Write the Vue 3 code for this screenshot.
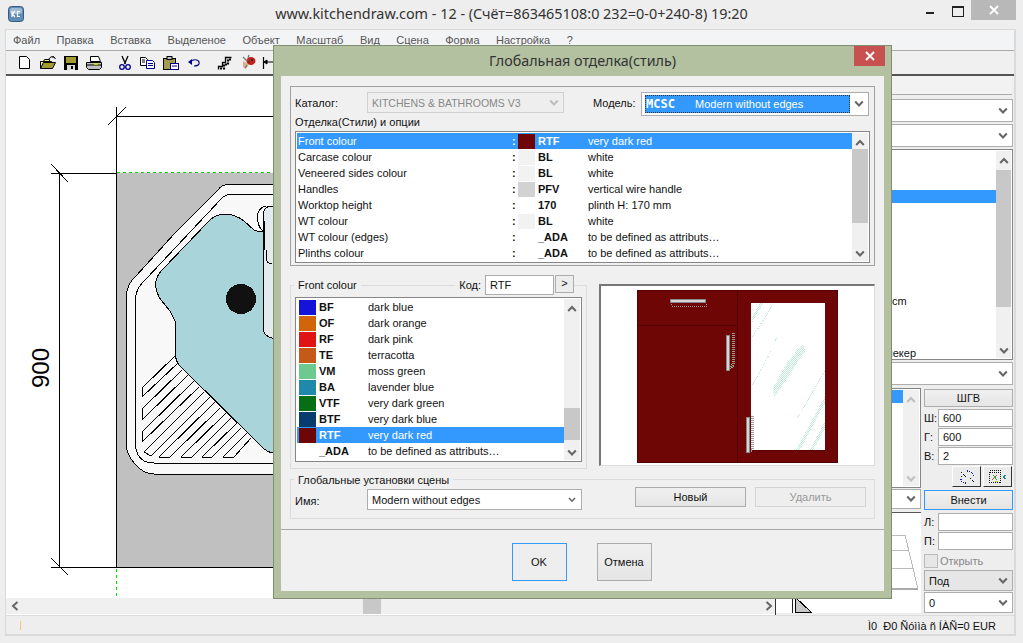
<script setup>
const menu = ['Файл','Правка','Вставка','Выделеное','Объект','Масштаб','Вид','Сцена','Форма','Настройка','?']
const options = [
  { name:'Front colour', sw:'#6e0606', code:'RTF', desc:'very dark red', sel:true },
  { name:'Carcase colour', sw:'#f2f2f2', code:'BL', desc:'white' },
  { name:'Veneered sides colour', sw:'#f2f2f2', code:'BL', desc:'white' },
  { name:'Handles', sw:'#d2d2d2', code:'PFV', desc:'vertical wire handle' },
  { name:'Worktop height', sw:'', code:'170', desc:'plinth H: 170 mm' },
  { name:'WT colour', sw:'#f2f2f2', code:'BL', desc:'white' },
  { name:'WT colour (edges)', sw:'', code:'_ADA', desc:'to be defined as attributs…' },
  { name:'Plinths colour', sw:'', code:'_ADA', desc:'to be defined as attributs…' },
]
const colours = [
  { sw:'#1414d8', code:'BF', desc:'dark blue' },
  { sw:'#d2650a', code:'OF', desc:'dark orange' },
  { sw:'#e01414', code:'RF', desc:'dark pink' },
  { sw:'#c55a18', code:'TE', desc:'terracotta' },
  { sw:'#6cca90', code:'VM', desc:'moss green' },
  { sw:'#2088aa', code:'BA', desc:'lavender blue' },
  { sw:'#066e14', code:'VTF', desc:'very dark green' },
  { sw:'#063c6e', code:'BTF', desc:'very dark blue' },
  { sw:'#6e0606', code:'RTF', desc:'very dark red', sel:true },
  { sw:'', code:'_ADA', desc:'to be defined as attributs…' },
]
const sideRows = Array.from({ length: 16 }, (_, i) => ({
  text: i === 11 ? 'cm' : i === 15 ? 'чекер' : '',
  sel: i === 3,
  cls: i === 11 ? 'r-cm' : i === 15 ? 'r-ch' : '',
}))
const hatch = [
  [176,355,142,388],[178,363,142,397],[142,388,142,397],[182,370,142,409],[142,409,142,419],
  [188,375,142,420],[194,381,142,432],[142,431,142,442],[199,387,142,442],[204,392,144,452],
  [144,452,151,456],[210,397,151,456],[215,402,159,457],[220,408,170,457],[226,413,181,457],
  [231,418,192,457],[237,423,202,457],[241,428,212,457],[247,433,223,457],[251,438,234,457],
  [159,457,170,457],[181,457,192,457],[202,457,212,457],[223,457,234,457]
]
</script>

<template>
  <div class="win">
    <svg class="defs" width="0" height="0">
      <symbol id="cd" viewBox="0 0 10 8"><path d="M1.2 1.5 L5 5.5 L8.8 1.5" fill="none" stroke="#666" stroke-width="2"/></symbol>
      <symbol id="cu" viewBox="0 0 10 8"><path d="M1.2 6 L5 2 L8.8 6" fill="none" stroke="#666" stroke-width="2"/></symbol>
    </svg>

    <header class="titlebar">
      <svg class="logo" width="16" height="16" viewBox="0 0 16 16">
        <rect x=".5" y=".5" width="15" height="15" rx="3" fill="#5f8db8" stroke="#39597a"/>
        <rect x="2" y="2" width="12" height="6" rx="2" fill="#9dbbd6"/>
        <path d="M4 5v6M7 5L4.5 8 7 11M12 5.500H9.500v5H12" fill="none" stroke="#fff" stroke-width="1.200"/>
      </svg>
      <div class="title">www.kitchendraw.com - 12 - (Счёт=863465108:0 232=0-0+240-8) 19:20</div>
      <div class="winbtns">
        <span class="wmin"></span>
        <span class="wmax"></span>
        <span class="wclose">
          <svg width="10" height="10" viewBox="0 0 10 10"><path d="M1 1L9 9M9 1L1 9" stroke="#fff" stroke-width="1.800"/></svg>
        </span>
      </div>
    </header>

    <div class="frame">
      <nav class="menubar">
        <span v-for="m in menu" :key="m">{{ m }}</span>
      </nav>
      <div class="toolbar">
        <svg class="tools" width="262" height="22" viewBox="14 52 262 22">
          <path d="M19.500 56.500h7l3 3v9h-10z" fill="#fff" stroke="#000"/>
          <path d="M40.500 61.500h3l1-2h5v2M40.500 68.500v-7h11v1" fill="#f4ee8e" stroke="#000"/>
          <path d="M40.500 68.500l3-6h12l-3 6z" fill="#a39a30" stroke="#000"/>
          <path d="M49 59c1-2 3-3 5-2M54 57l1.500 2M54 57l-2 0" fill="none" stroke="#000"/>
          <rect x="64" y="56" width="14" height="14" fill="#000"/>
          <rect x="66" y="57" width="10" height="6" fill="#a39a30"/>
          <rect x="67" y="65" width="8" height="5" fill="#d8d8d8"/>
          <rect x="71" y="66" width="2" height="3" fill="#000"/>
          <path d="M90.500 56.500h8l2 5h-10z" fill="#fff" stroke="#000"/>
          <path d="M86.500 62.500h15v5l-2 2h-11l-2-2z" fill="#c0c0c0" stroke="#000"/>
          <path d="M87 65h14" stroke="#000"/><path d="M94 64h4" stroke="#e8e000" stroke-width="1.500"/>
          <path d="M122 56l3.500 8M128 56l-3.500 8" stroke="#000" stroke-width="1.300"/>
          <circle cx="122" cy="67" r="2.300" fill="none" stroke="#00008c" stroke-width="1.300"/>
          <circle cx="128" cy="67" r="2.300" fill="none" stroke="#00008c" stroke-width="1.300"/>
          <path d="M140.500 57.500h5l2 2v6h-7z" fill="#fff" stroke="#000"/>
          <path d="M142 60h3M142 62h3" stroke="#000"/>
          <path d="M146.500 60.500h6l2 2v6h-8z" fill="#fff" stroke="#00008c"/>
          <path d="M148 63.500h5M148 65.500h5" stroke="#00008c"/>
          <rect x="163.500" y="58.500" width="12" height="11" fill="#a39a50" stroke="#000"/>
          <rect x="167" y="56.500" width="5" height="3" fill="#c0c0c0" stroke="#000"/>
          <rect x="170.500" y="63.500" width="8" height="6" fill="#fff" stroke="#00008c"/>
          <path d="M172 66h5" stroke="#00008c"/>
          <path d="M190 62c3-3 8-3 9 0 1 3-2 4-5 4" fill="none" stroke="#00008c" stroke-width="1.200"/>
          <path d="M188 62l4-3v6z" fill="#00008c"/>
          <path d="M218.500 69.500v-3h4v-4h3v-5h6" fill="none" stroke="#000" stroke-width="1.300"/>
          <path d="M220 68.500h4v-4h4v-5h4" fill="none" stroke="#000" stroke-width="2.200" stroke-dasharray="2 1"/>
          <path d="M243 61l6 3-3 5-3-2z" fill="#d8b090"/>
          <ellipse cx="251" cy="61" rx="4.500" ry="4" fill="#c4231c"/>
          <circle cx="252" cy="60" r="1" fill="#222"/><circle cx="249" cy="62" r=".8" fill="#222"/>
          <path d="M243 57l4 4M249 55l-1 3M245 68l2-3" stroke="#777" stroke-width="1.300"/>
          <path d="M263.500 57v12" stroke="#000" stroke-width="1.200"/>
          <path d="M264 62h9M264 62l3-2v4z" stroke="#000" fill="#000"/>
        </svg>
      </div>

      <div class="main">
        <div class="left">
          <div class="canvas">
            <svg class="plan" width="769" height="521" viewBox="6 77 769 521" shape-rendering="crispEdges">
              <rect x="116" y="173" width="659" height="394" fill="#c0c0c0"/>
              <path d="M116 116.500H775M116.500 107V567M51 173.500H116M59.500 173V567M51 567.500H775" stroke="#000" stroke-width="1" fill="none"/>
              <path d="M108 125L126 107M51 164L68 182M51 558L68 575" stroke="#000" fill="none"/>
              <path d="M117 172.500H775" stroke="#00e000" stroke-dasharray="3 3"/>
              <path d="M116.500 569V598" stroke="#00e000" stroke-dasharray="3 3"/>
              <path d="M775 184.500H230Q222 184 218 190L175 233L136 276Q127 284 126.500 295V447Q127 454 134 463Q143 474 154 474H775V184" fill="#f8f8f8" stroke="#000"/>
              <path d="M775 194.500H232Q226 194 222 198L146 279Q136 288 135.500 298V445Q136 456 144 461Q148 463 154 463H775" fill="none" stroke="#000"/>
              <path d="M775 232H263Q258 232 254 230L244 221Q235 214 224 214Q214 215 208 222L163 269Q156 276 155.500 284Q156 293 161 300L170 311L175.500 322V355Q176 362 180 366L262 447Q267 452 273 453H775Z" fill="#a8d4da" stroke="#000"/>
              <path d="M266 206Q257 208 257.500 218Q258 228 264 232" fill="#f8f8f8" stroke="#000"/>
              <path d="M775 206H272Q264 206 263.500 214V330Q264 336 272 338H775Z" fill="#e4eaed" stroke="#000"/>
              <path d="M264 221V250" stroke="#000" stroke-width="1.500"/>
              <path d="M266 250V258Q266 263 272 264" fill="none" stroke="#000"/>
              <circle cx="241" cy="299" r="15" fill="#111"/>
              <path v-for="(h, i) in hatch" :key="i" :d="`M${h[0]} ${h[1]}L${h[2]} ${h[3]}`" stroke="#000" fill="none"/>
              <text class="dim" transform="translate(49 388) rotate(-90)">900</text>
            </svg>
          </div>
          <div class="hscroll">
            <svg class="hs-l" width="8" height="10" viewBox="0 0 8 10"><path d="M6.500 1L2 5l4.500 4" fill="none" stroke="#666" stroke-width="2"/></svg>
            <span class="hs-thumb"></span>
            <svg class="hs-r" width="8" height="10" viewBox="0 0 8 10"><path d="M1.500 1L6 5l-4.500 4" fill="none" stroke="#666" stroke-width="2"/></svg>
          </div>
        </div>

        <aside class="side">
          <div class="band"></div>
          <div class="sel wh h24"><svg class="chev"><use href="#cd"/></svg></div>
          <div class="sel wh h24 mt2"><svg class="chev"><use href="#cd"/></svg></div>
          <div class="bigl">
            <div class="bigrows">
              <div v-for="(r, i) in sideRows" :key="i" class="bigrow" :class="[r.cls, { on: r.sel }]">{{ r.text }}</div>
            </div>
            <div class="sb sb1">
              <svg class="arr"><use href="#cu"/></svg>
              <div class="thumb t-big"></div>
              <svg class="arr end"><use href="#cd"/></svg>
            </div>
          </div>
          <div class="sel wh h24 mt2"><svg class="chev"><use href="#cd"/></svg></div>
          <div class="lower">
            <div class="lowleft">
              <div class="smalllist">
                <div class="smallrows"><div class="smallrow"></div></div>
                <div class="sb sb2">
                  <svg class="arr"><use href="#cu" opacity=".35"/></svg>
                  <svg class="arr end"><use href="#cd" opacity=".35"/></svg>
                </div>
              </div>
              <div class="sel wh h20"><svg class="chev"><use href="#cd"/></svg></div>
              <div class="drawbox">
                <svg width="145" height="100" viewBox="776 513 145 100" shape-rendering="crispEdges">
                  <path d="M792.500 585V613" stroke="#222"/>
                  <path d="M795 597V612H811Z" fill="#c8c8c8" stroke="#000"/>
                  <path d="M795 597L811 612" stroke="#000"/>
                  <path d="M880 535H905L918 589M880 550H909M880 568H913" fill="none" stroke="#bbb" stroke-width="1"/>
                  <path d="M880 589H918" stroke="#aaa" stroke-width="2"/>
                </svg>
              </div>
            </div>
            <div class="lowright">
              <button class="btn b-shgv">ШГВ</button>
              <label class="fld"><b>Ш:</b><span class="inp">600</span></label>
              <label class="fld"><b>Г:</b><span class="inp">600</span></label>
              <label class="fld"><b>В:</b><span class="inp">2</span></label>
              <div class="iconbtns">
                <span class="ib">
                  <svg width="18" height="16" viewBox="0 0 18 16" shape-rendering="crispEdges"><path d="M9 2q5 0 6 5M3 10q0 4 6 4" stroke="#1a1ad0" stroke-width="1.300" stroke-dasharray="1 1" fill="none"/><path d="M3 3l5 5M3 8l3-3M12 9l4 4" stroke="#111" stroke-width="1.300" stroke-dasharray="2 1" fill="none"/></svg>
                </span>
                <span class="ib">
                  <svg width="20" height="16" viewBox="0 0 20 16" shape-rendering="crispEdges"><rect x="1.500" y="1.500" width="11" height="12" fill="none" stroke="#111" stroke-dasharray="1 1"/><path d="M2 3h10" stroke="#111" stroke-dasharray="1 1"/><path d="M4 11l5-5" stroke="#d44"/><path d="M5 6l4 5" stroke="#2a2"/><path d="M7 12h3" stroke="#cc2"/><path d="M18 6l-3 2 3 2" fill="none" stroke="#1a8a8a" stroke-width="1.300"/></svg>
                </span>
              </div>
              <button class="btn b-in">Внести</button>
              <label class="fld"><b>Л:</b><span class="inp"></span></label>
              <label class="fld"><b>П:</b><span class="inp"></span></label>
              <div class="chk"><span class="box"></span>Открыть</div>
              <div class="sel gray h21"><span>Под</span><svg class="chev"><use href="#cd"/></svg></div>
              <div class="sel wh h21 mt1"><span>0</span><svg class="chev"><use href="#cd"/></svg></div>
            </div>
          </div>
        </aside>
      </div>

      <footer class="status">
        <span class="tick"></span>
        <span class="stext">Ì0&nbsp;&nbsp;Ð0 Ñóììà ñ ÍÀÑ=0 EUR</span>
      </footer>
    </div>

    <section class="dlg">
      <div class="dlgtitle">
        <span>Глобальная отделка(стиль)</span>
        <span class="dclose">
          <svg width="10" height="10" viewBox="0 0 10 10"><path d="M1 1L9 9M9 1L1 9" stroke="#fff" stroke-width="1.800"/></svg>
        </span>
      </div>
      <div class="client">
        <div class="gtop">
          <div class="catrow">
            <span class="lcat">Каталог:</span>
            <div class="sel dis"><span>KITCHENS &amp; BATHROOMS V3</span><svg class="chev"><use href="#cd" opacity=".35"/></svg></div>
            <span class="lmod">Модель:</span>
            <div class="sel model">
              <div class="mfocus"><b>MCSC</b><span>Modern without edges</span></div>
              <svg class="chev"><use href="#cd"/></svg>
            </div>
          </div>
          <div class="optlabel">Отделка(Стили) и опции</div>
          <div class="list optlist">
            <div class="rows">
              <div v-for="o in options" :key="o.name" class="row" :class="{ on: o.sel }">
                <span class="oname">{{ o.name }}</span>
                <span class="colon">:</span>
                <span class="sw" :style="{ background: o.sw || 'transparent' }"></span>
                <b class="ocode">{{ o.code }}</b>
                <span>{{ o.desc }}</span>
              </div>
            </div>
            <div class="sb">
              <svg class="arr"><use href="#cu"/></svg>
              <div class="thumb t-opt"></div>
              <svg class="arr end"><use href="#cd"/></svg>
            </div>
          </div>
        </div>

        <div class="midrow">
          <div class="gcol">
            <div class="gchead">
              <span class="lg">Front colour</span>
              <span class="lg lkod">Код:</span>
              <span class="kod">RTF</span>
              <span class="kgo">&gt;</span>
            </div>
            <div class="list collist">
              <div class="rows">
                <div v-for="c in colours" :key="c.code" class="row" :class="{ on: c.sel }">
                  <span class="sw csw" :style="{ background: c.sw || 'transparent' }"></span>
                  <b class="ccode">{{ c.code }}</b>
                  <span>{{ c.desc }}</span>
                </div>
              </div>
              <div class="sb">
                <svg class="arr"><use href="#cu"/></svg>
                <div class="thumb t-col"></div>
                <svg class="arr end"><use href="#cd"/></svg>
              </div>
            </div>
          </div>
          <div class="preview">
            <svg width="273" height="180" viewBox="601 285 273 180" shape-rendering="crispEdges">
              <defs>
                <pattern id="dots" width="2" height="2" patternUnits="userSpaceOnUse">
                  <rect width="1" height="1" fill="#bfe8dc"/><rect x="1" y="1" width="1" height="1" fill="#bfe8dc"/>
                </pattern>
              </defs>
              <rect x="637.500" y="289.500" width="200" height="172" fill="#6e0606" stroke="#520404"/>
              <path d="M637 324.500H737M737.500 289V462" stroke="#520404"/>
              <rect x="751" y="302" width="74" height="147" fill="#fff"/>
              <path d="M751 449.500H825" stroke="#520404"/>
              <g fill="url(#dots)">
                <path d="M752 316L760 302H763L752 322Z"/>
                <path d="M803 342L805 350L790 373L774 397L773 387L787 362Z"/>
                <path d="M825 395V402L800 449H796Z"/>
                <path d="M825 420V428L813 449H810Z"/>
              </g>
              <g fill="none" stroke="#bfe8dc" stroke-dasharray="1 1">
                <path d="M772 305L752 337M771 350L752 385M825 370L802 409M800 413L797 417M777 337L775 340"/>
              </g>
              <path d="M671 303L672 305H707L706 302" fill="none" stroke="#999" stroke-dasharray="1 1"/>
              <rect x="670.500" y="298.500" width="35" height="3" fill="#d6d6d6" stroke="#888"/>
              <path d="M733 332V364L729 369" fill="none" stroke="#999" stroke-width="3" stroke-dasharray="1 1"/>
              <rect x="726.500" y="334.500" width="3" height="35" fill="#d6d6d6" stroke="#888"/>
              <path d="M752 415V449L749 450" fill="none" stroke="#999" stroke-width="3" stroke-dasharray="1 1"/>
              <rect x="746.500" y="416.500" width="3" height="35" fill="#d6d6d6" stroke="#888"/>
            </svg>
          </div>
        </div>

        <div class="gglob">
          <div class="globlab">Глобальные установки сцены</div>
          <div class="globrow">
            <span class="lname">Имя:</span>
            <div class="sel wh gname"><span>Modern without edges</span><svg class="chev sm"><use href="#cd"/></svg></div>
            <button class="btn b-new">Новый</button>
            <button class="btn b-del" disabled>Удалить</button>
          </div>
        </div>

        <div class="actions">
          <button class="btn big focus">OK</button>
          <button class="btn big">Отмена</button>
        </div>
      </div>
    </section>
  </div>
</template>

<style scoped>
.win { position: relative; width: 1023px; height: 643px; overflow: hidden; background: #eeeeee; color: #111; font: 11px/16px "Liberation Sans", sans-serif; }
.defs { position: absolute; }
.titlebar { height: 29px; display: flex; align-items: center; position: relative; justify-content: center; }
.logo { position: absolute; left: 8px; top: 6px; }
.title { font: 14.400px/18px "Noto Sans", sans-serif; color: #333; margin-top: -1px; }
.winbtns { position: absolute; right: 7px; top: 0; display: flex; align-items: flex-start; }
.wmin { width: 8px; height: 2px; background: #222; margin: 12px 18px 0 0; }
.wmax { width: 10px; height: 8px; border: 1px solid #222; border-top-width: 2px; margin: 6px 7px 0 0; }
.wclose { width: 45px; height: 20px; background: #b8b8b8; display: flex; align-items: center; justify-content: center; }

.frame { margin: 0 7px 0 5px; height: 607px; border: 1px solid #dadada; border-right-width: 2px; box-sizing: border-box; display: flex; flex-direction: column; }
.menubar { height: 21px; background: #f3f4f6; border-bottom: 1px solid #a8a8a8; display: flex; gap: 16.500px; padding-left: 7px; align-items: center; color: #555; box-sizing: border-box; flex: none; }
.toolbar { height: 25px; flex: none; background: #f0f0f0; border-bottom: 2px solid #555; box-sizing: border-box; padding: 1px 0 0 8px; }
.tools { display: block; }
.main { flex: none; height: 539px; display: flex; }
.left { width: 769px; flex: none; display: flex; flex-direction: column; }
.canvas { height: 522px; background: #fff; flex: none; }
.plan { display: block; margin-top: 1px; }
.dim { font: 24px "Liberation Sans", sans-serif; fill: #000; }
.hscroll { height: 16px; background: #f0f0f0; border-bottom: 1px solid #fff; display: flex; align-items: center; position: relative; }
.hs-l { margin-left: 5px; }
.hs-thumb { width: 18px; height: 16px; background: #c8c8c8; margin-left: 344px; }
.hs-r { margin-left: auto; margin-right: 2px; }

.side { flex: 1; display: flex; flex-direction: column; border-left: 1px solid #333; min-width: 0; padding-right: 1px; box-sizing: border-box; }
.band { height: 19px; flex: none; border-bottom: 1px solid #aaa; margin: 0 1px 4px 0; box-sizing: border-box; background: #f2f2f2; }
.sel { position: relative; display: flex; align-items: center; box-sizing: border-box; border: 1px solid #adadad; flex: none; padding-left: 4px; }
.wh { background: #fff; }
.gray { background: #e6e6e6; border-color: #adadad; }
.h24 { height: 23px; }
.h20 { height: 20px; margin-top: 1px; }
.h21 { height: 21px; }
.mt2 { margin-top: 2px; }
.mt1 { margin-top: 1px; }
.chev { position: absolute; right: 4px; top: 50%; margin-top: -4px; width: 10px; height: 8px; }
.chev.sm { transform: scale(.8); }
.bigl { margin-top: 2px; height: 211px; display: flex; background: #fff; border: 1px solid #868686; box-sizing: border-box; flex: none; padding: 1px; }
.bigrows { flex: 1; }
.bigrow { height: 13px; line-height: 14px; }
.bigrow.on { background: #3399ff; }
.r-cm { padding-left: 114px; }
.r-ch { padding-left: 109px; }
.sb { width: 16px; flex: none; background: #f0f0f0; display: flex; flex-direction: column; align-items: stretch; }
.sb1 { width: 15px; }
.arr { width: 10px; height: 8px; margin: 6px auto 3px; flex: none; }
.arr.end { margin: auto auto 3px; }
.thumb { background: #c8c8c8; flex: none; }
.t-big { height: 137px; margin-top: 2px; }
.t-opt { height: 74px; margin-top: -1px; }
.t-col { height: 32px; margin-top: 92px; }
.lower { display: flex; flex: none; margin-top: 3px; }
.lowleft { width: 145px; flex: none; display: flex; flex-direction: column; }
.smalllist { height: 100px; display: flex; background: #fff; border: 1px solid #868686; box-sizing: border-box; padding: 1px; }
.smallrows { flex: 1; }
.smallrow { height: 13px; background: #3399ff; }
.sb2 { width: 16px; }
.drawbox { margin-top: 3px; height: 101px; background: #fff; border-top: 1px solid #555; box-sizing: border-box; }
.drawbox svg { display: block; }
.lowright { flex: 1; padding: 1px 0 0 3px; display: flex; flex-direction: column; min-width: 0; }
.btn { font: 11px/14px "Liberation Sans", sans-serif; color: #111; border: 1px solid #adadad; background: linear-gradient(#f0f0f0, #e5e5e5); padding: 0; display: block; box-sizing: border-box; }
.b-shgv { height: 18px; margin-bottom: 2px; }
.fld { display: flex; align-items: center; height: 18px; margin-bottom: 1px; }
.fld b { width: 14px; font-weight: 400; flex: none; }
.inp { flex: 1; height: 18px; background: #fff; border: 1px solid #adadad; box-sizing: border-box; padding-left: 4px; line-height: 16px; }
.iconbtns { display: flex; justify-content: flex-end; gap: 2px; margin: 0 1px 3px; }
.ib { width: 29px; height: 21px; background: #ebebeb; border: 1px solid #fff; border-right-color: #333; border-bottom-color: #333; box-sizing: border-box; display: flex; align-items: center; justify-content: center; }
.b-in { height: 20px; border-color: #3399ff; margin-bottom: 3px; }
.chk { display: flex; align-items: center; color: #888; height: 14px; margin: 3px 0 2px; gap: 1px; }
.box { width: 12px; height: 12px; background: #e6e6e6; border: 1px solid #bbb; margin-right: 1px; }

.status { flex: 1; background: #eee; border-top: 1px solid #ddd; position: relative; display: flex; align-items: center; border-bottom: 1px solid #dadada; padding-top: 1px; }
.tick { width: 1px; height: 9px; background: #f5c97a; margin-left: 14px; }
.stext { margin-left: auto; margin-right: 18px; }

.dlg { position: absolute; left: 273px; top: 45px; width: 619px; height: 554px; box-sizing: border-box; background: #b3c1a1; border: 1px solid #7f8f70; padding: 0 7px 7px; display: flex; flex-direction: column; }
.dlgtitle { height: 30px; flex: none; position: relative; display: flex; align-items: center; justify-content: center; font: 14.300px/18px "Noto Sans", sans-serif; color: #333; }
.dclose { position: absolute; right: -1px; top: 0; width: 31px; height: 20px; background: #c75050; display: flex; align-items: center; justify-content: center; }
.client { flex: 1; background: #f0f0f0; padding: 10px 9px 0; min-height: 0; display: flex; flex-direction: column; }
.gtop { height: 180px; flex: none; border: 1px solid #a0a0a0; box-sizing: border-box; padding: 5px 4px 0; }
.catrow { display: flex; align-items: flex-start; height: 25px; }
.lcat { width: 72px; flex: none; padding-top: 3px; }
.sel.dis { width: 197px; height: 21px; background: #eeeeee; border-color: #d0d0d0; color: #888; font-size: 10.500px; }
.lmod { margin-left: 29px; width: 48px; padding-top: 3px; flex: none; }
.sel.model { width: 228px; height: 24px; background: #fff; padding-left: 3px; }
.mfocus { width: 205px; height: 18px; background: #3399ff; color: #fff; outline: 1px dotted #333; outline-offset: -1px; display: flex; align-items: center; padding-left: 1px; box-sizing: border-box; }
.mfocus b { width: 49px; font-family: "DejaVu Sans Mono", monospace; font-size: 12px; }
.optlabel { height: 17px; line-height: 16px; margin-top: -3px; }
.list { display: flex; background: #fff; border: 1px solid #868686; box-sizing: border-box; padding: 1px; }
.rows { flex: 1; min-width: 0; }
.row { height: 16px; display: flex; align-items: center; white-space: nowrap; }
.row.on { background: #3399ff; color: #fff; }
.optlist { height: 132px; width: 575px; }
.oname { width: 213px; padding-left: 1px; flex: none; box-sizing: border-box; }
.colon { width: 8px; padding-left: 2px; box-sizing: border-box; flex: none; font-weight: 700; }
.sw { width: 17px; height: 15px; flex: none; }
.ocode { width: 53px; padding-left: 3px; flex: none; box-sizing: border-box; }
.midrow { display: flex; gap: 12px; margin-top: 9px; height: 200px; flex: none; }
.gcol { width: 297px; height: 184px; margin-top: 10px; flex: none; border: 1px solid #dcdcdc; box-sizing: border-box; padding: 0 4px; }
.gchead { display: flex; align-items: flex-start; height: 22px; margin: -11px 8px 0 -1px; }
.lg { background: #f0f0f0; padding: 0 4px; margin-top: 2px; line-height: 16px; white-space: nowrap; flex: none; }
.lkod { margin-left: auto; }
.kod { width: 69px; height: 20px; background: #fff; border: 1px solid #adadad; box-sizing: border-box; padding-left: 4px; line-height: 18px; flex: none; }
.kgo { width: 19px; height: 18px; margin-left: 1px; background: #ececec; border: 1px solid #adadad; box-sizing: border-box; text-align: center; line-height: 15px; flex: none; }
.collist { height: 165px; width: 287px; }
.csw { margin: 0 3px 0 2px; }
.ccode { width: 49px; flex: none; }
.preview { width: 276px; height: 182px; margin-top: 9px; flex: none; background: #fff; border-top: 2px solid #777; border-left: 2px solid #777; border-right: 1px solid #dcdcdc; border-bottom: 1px solid #dcdcdc; box-sizing: border-box; }
.preview svg { display: block; }
.gglob { height: 40px; flex: none; margin-top: 4px; border: 1px solid #dcdcdc; box-sizing: border-box; width: 585px; }
.globlab { margin: -8px 0 0 3px; padding: 0 4px; background: #f0f0f0; display: table; line-height: 16px; }
.globrow { display: flex; align-items: flex-start; padding-left: 4px; margin-top: 1px; }
.lname { width: 72px; flex: none; padding-top: 4px; }
.gname { width: 215px; height: 21px; padding-left: 4px; }
.b-new { width: 111px; height: 20px; margin-left: 53px; margin-top: -2px; }
.b-del { width: 111px; height: 20px; margin-left: 9px; margin-top: -2px; color: #999; border-color: #d4d4d4; background: #eee; }
.actions { flex: 1; margin: 10px -9px 0; border-top: 1px solid #a8a8a8; display: flex; justify-content: center; gap: 30px; padding-top: 13px; padding-right: 2px; box-sizing: border-box; }
.big { width: 55px; height: 38px; }
.focus { border-color: #3399ff; background: #eeeeee; }
</style>

<style>
html, body { margin: 0; background: #eee; }
</style>
